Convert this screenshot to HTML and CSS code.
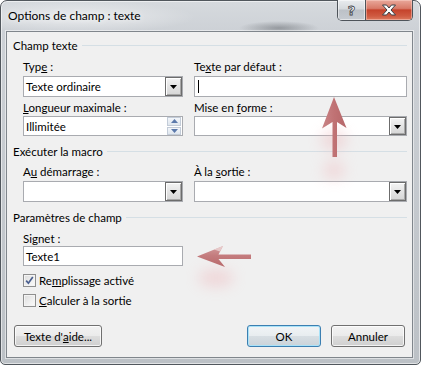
FILE: index.html
```html
<!DOCTYPE html>
<html lang="fr">
<head>
<meta charset="utf-8">
<title>Options de champ : texte</title>
<link rel="stylesheet" href="styles.css">
</head>
<body>
<div class="window">
  <div class="titlebar">
    <span class="title">Options de champ : texte</span>
    <div class="caption">
      <div class="cap-btn help"><span class="qmark">?</span></div>
      <div class="cap-btn close">
        <svg width="16" height="12" viewBox="0 0 16 12"><path d="M1.5 1 H5.5 L8 4 L10.5 1 H14.5 L10 6 L14.5 11 H10.5 L8 8 L5.5 11 H1.5 L6 6 Z" fill="#fff" stroke="#3a3f45" stroke-width="1" stroke-linejoin="round"/></svg>
      </div>
    </div>
  </div>
  <div class="client">
    <section class="group">
      <div class="group-head"><span>Champ texte</span><i class="rule"></i></div>
      <div class="fields first">
        <div class="field">
          <div class="lbl">Typ<u>e</u> :</div>
          <div class="combo"><span class="val">Texte ordinaire</span><span class="drop"><svg width="7" height="4" viewBox="0 0 7 4"><path d="M0 0H7L3.5 4Z" fill="#000"/></svg></span></div>
        </div>
        <div class="field">
          <div class="lbl">Te<u>x</u>te par défaut :</div>
          <div class="edit"><span class="caret"></span></div>
        </div>
        <div class="field row2">
          <div class="lbl"><u>L</u>ongueur maximale :</div>
          <div class="edit short"><span class="val">Illimitée</span>
            <span class="spin">
              <span class="spin-b"><svg width="7" height="4" viewBox="0 0 7 4"><path d="M0 4H7L3.5 0Z" fill="#5b79ab"/></svg></span>
              <span class="spin-b"><svg width="7" height="4" viewBox="0 0 7 4"><path d="M0 0H7L3.5 4Z" fill="#5b79ab"/></svg></span>
            </span>
          </div>
        </div>
        <div class="field row2">
          <div class="lbl">Mise en <u>f</u>orme :</div>
          <div class="combo short"><span class="val"></span><span class="drop"><svg width="7" height="4" viewBox="0 0 7 4"><path d="M0 0H7L3.5 4Z" fill="#000"/></svg></span></div>
        </div>
      </div>
    </section>

    <section class="group">
      <div class="group-head"><span>Exécuter la macro</span><i class="rule"></i></div>
      <div class="fields second">
        <div class="field">
          <div class="lbl">A<u>u</u> démarrage :</div>
          <div class="combo"><span class="val"></span><span class="drop"><svg width="7" height="4" viewBox="0 0 7 4"><path d="M0 0H7L3.5 4Z" fill="#000"/></svg></span></div>
        </div>
        <div class="field">
          <div class="lbl">À la <u>s</u>ortie :</div>
          <div class="combo"><span class="val"></span><span class="drop"><svg width="7" height="4" viewBox="0 0 7 4"><path d="M0 0H7L3.5 4Z" fill="#000"/></svg></span></div>
        </div>
      </div>
    </section>

    <section class="group">
      <div class="group-head"><span>Paramètres de champ</span><i class="rule"></i></div>
      <div class="fields third">
        <div class="field">
          <div class="lbl tight">Si<u>g</u>net :</div>
          <div class="edit short"><span class="val">Texte1</span></div>
        </div>
      </div>
      <div class="checks">
        <div class="check-row">
          <span class="box"><svg width="11" height="11" viewBox="0 0 11 11"><path d="M2.2 5.6 L4.4 8.2 L8.8 2" fill="none" stroke="#4a5f8f" stroke-width="1.7"/></svg></span>
          <span>Re<u>m</u>plissage activé</span>
        </div>
        <div class="check-row second-row">
          <span class="box"></span>
          <span><u>C</u>alculer à la sortie</span>
        </div>
      </div>
    </section>

    <div class="buttons">
      <div class="btn help-btn">Texte d'<u>a</u>ide...</div>
      <div class="btn ok">OK</div>
      <div class="btn cancel">Annuler</div>
    </div>
  </div>
</div>

<svg class="arrows" width="421" height="365" viewBox="0 0 421 365">
  <defs>
    <filter id="blur" x="-100%" y="-100%" width="300%" height="300%"><feGaussianBlur stdDeviation="7"/></filter>
    <linearGradient id="gUp" x1="0" y1="0" x2="1" y2="0">
      <stop offset="0" stop-color="#c98486"/>
      <stop offset="0.5" stop-color="#c07274"/>
      <stop offset="1" stop-color="#b56769"/>
    </linearGradient>
    <linearGradient id="gLeft" x1="0" y1="0" x2="0" y2="1">
      <stop offset="0" stop-color="#d39c9d"/>
      <stop offset="0.45" stop-color="#c47c7e"/>
      <stop offset="1" stop-color="#b8696b"/>
    </linearGradient>
  </defs>
  <g filter="url(#blur)" opacity="0.4">
    <ellipse cx="334" cy="140" rx="13" ry="10" fill="#eeb0b5"/>
    <ellipse cx="334" cy="170" rx="11" ry="10" fill="#f0b8bc"/>
    <ellipse cx="216" cy="278" rx="18" ry="9" fill="#eeb0b5"/>
  </g>
  <path d="M334 97 L346.5 128 L337 122 L337 157 L332.5 157 L332.5 122 L322 128.5 Z" fill="url(#gUp)"/>
  <path d="M197 256.5 L223 246 L218.5 254.5 L251 254.5 L251 259 L218.5 259 L225 267 Z" fill="url(#gLeft)"/>
  <path d="M214 249.5 L223 246 L220 251.5 Z" fill="#ecd6d6" opacity="0.8"/>
</svg>
</body>
</html>
```
FILE: styles.css
```css
* { box-sizing: border-box; }
html, body { margin: 0; padding: 0; }
body {
  width: 421px;
  height: 365px;
  overflow: hidden;
  position: relative;
  background: #ffffff;
  font-family: Lato, "Noto Sans", sans-serif;
  font-size: 11.5px;
  color: #000;
}
u { text-decoration: underline; text-underline-offset: 1px; }

.window {
  width: 421px;
  height: 365px;
  border: 1px solid #51575d;
  border-radius: 7px 7px 5px 5px;
  background:
    radial-gradient(ellipse 40px 7px at 278px 27px, rgba(80, 84, 90, 0.45), rgba(80, 84, 90, 0)),
    radial-gradient(ellipse 120px 16px at 75px 16px, rgba(255, 255, 255, 0.55), rgba(255, 255, 255, 0)),
    linear-gradient(180deg, #d6dade 0, #cdd1d6 30px, #bcc1c6 100%);
  box-shadow: inset 0 0 0 1px rgba(255, 255, 255, 0.55);
  display: flex;
  flex-direction: column;
}

.titlebar {
  height: 30px;
  display: flex;
  align-items: flex-start;
  padding-left: 7px;
}
.title {
  margin-top: 7px;
  line-height: 16px;
  font-size: 12px;
  color: #000;
  text-shadow: 0 0 6px rgba(255, 255, 255, 0.9);
}
.caption {
  margin-left: auto;
  margin-right: 7px;
  margin-top: -1px;
  height: 21px;
  display: flex;
  border: 1px solid #4e545a;
  border-top: none;
  border-radius: 0 0 5px 5px;
  overflow: hidden;
}
.cap-btn {
  height: 20px;
  display: flex;
  align-items: center;
  justify-content: center;
}
.help {
  width: 28px;
  border-right: 1px solid #4e545a;
  background: linear-gradient(180deg, #e9ecef 0, #d5d9dd 45%, #bcc1c7 50%, #c6cbd1 100%);
  box-shadow: inset 0 0 0 1px rgba(255, 255, 255, 0.5);
}
.qmark {
  font-family: "DejaVu Sans", sans-serif;
  font-weight: bold;
  font-size: 13px;
  line-height: 13px;
  color: #fff;
  -webkit-text-stroke: 0.8px #3d4248;
  margin-top: 1px;
}
.close {
  width: 46px;
  background: linear-gradient(180deg, #e9a89b 0, #d87a68 42%, #c5432c 50%, #cf5a41 80%, #dc7a5f 100%);
  box-shadow: inset 0 0 0 1px rgba(255, 220, 210, 0.45);
}
.close svg { display: block; }

.client {
  flex: 1;
  margin: 0 7px 6px 5px;
  background: #f0f0f0;
  border: 1px solid #80868c;
  box-shadow: 0 0 0 1px rgba(255, 255, 255, 0.5);
  padding: 0 5px 10px 6px;
  display: flex;
  flex-direction: column;
}

.group-head {
  display: flex;
  align-items: center;
  height: 15px;
  line-height: 15px;
  margin-top: 6px;
}
.group + .group .group-head { margin-top: 8px; }
.rule {
  flex: 1;
  height: 1px;
  margin-left: 4px;
  background: #d5dfe5;
}

.fields {
  display: grid;
  grid-template-columns: 160px 1fr;
  column-gap: 11px;
  padding-left: 10px;
}
.fields.first { margin-top: 6px; row-gap: 3px; }
.fields.second { margin-top: 5px; }
.fields.third { margin-top: 6px; }

.field { display: flex; flex-direction: column; }
.lbl {
  height: 15px;
  line-height: 15px;
  margin-bottom: 2px;
}
.row2 .lbl { margin-bottom: 1px; }
.lbl.tight { margin-bottom: 0; }

.edit, .combo {
  height: 21px;
  background: #fff;
  border: 1px solid #a9abb0;
  display: flex;
  align-items: center;
  padding-left: 2px;
}
.short { height: 20px; }
.val { flex: 1; line-height: 15px; white-space: nowrap; }
.caret {
  width: 1px;
  height: 13px;
  background: #000;
  margin-left: 1px;
}

.drop {
  width: 17px;
  height: 19px;
  border: 1px solid #6c6c6c;
  background: linear-gradient(180deg, #f4f4f4 0, #e4e4e4 50%, #d6d6d6 100%);
  box-shadow: inset 1px 1px 0 #ffffff, inset -1px -1px 0 #a8a8a8;
  display: flex;
  align-items: center;
  justify-content: center;
}
.short .drop { height: 18px; }
.drop svg { display: block; margin-top: 1px; }

.spin {
  display: flex;
  flex-direction: column;
  width: 14px;
  height: 18px;
  margin-right: 1px;
  gap: 1px;
}
.spin-b {
  flex: 1;
  border: 1px solid #c3ccd8;
  background: linear-gradient(180deg, #f3f6fa, #dfe6ee);
  display: flex;
  align-items: center;
  justify-content: center;
}
.spin-b svg { display: block; }

.checks {
  padding-left: 10px;
  margin-top: 7px;
}
.check-row {
  display: flex;
  align-items: center;
  height: 15px;
  line-height: 15px;
  gap: 3px;
}
.check-row.second-row { margin-top: 5px; }
.box {
  width: 13px;
  height: 13px;
  border: 1px solid #8f8f8f;
  background: linear-gradient(135deg, #dcdcdc 0, #f0f0f0 60%, #fbfbfb 100%);
  box-shadow: inset 0 0 0 1px #f4f4f4;
  display: flex;
  align-items: center;
  justify-content: center;
}
.box svg { display: block; }

.buttons {
  display: flex;
  margin-top: 17px;
  padding-left: 1px;
  padding-right: 2px;
  gap: 10px;
}
.btn {
  height: 22px;
  border: 1px solid #707070;
  border-radius: 3px;
  background: linear-gradient(180deg, #f2f2f2 0, #ebebeb 48%, #dddddd 52%, #cfcfcf 100%);
  box-shadow: inset 0 0 0 1px rgba(255, 255, 255, 0.75);
  display: flex;
  align-items: center;
  justify-content: center;
  line-height: 15px;
}
.help-btn { width: 88px; }
.ok {
  width: 74px;
  margin-left: auto;
  border-color: #3c7fb1;
  box-shadow: inset 0 0 0 1px #a9e2f8;
  background: linear-gradient(180deg, #f1f4f6 0, #e8edf0 48%, #d7dee3 52%, #cbd3d9 100%);
}
.cancel { width: 74px; }

.arrows {
  position: absolute;
  left: 0;
  top: 0;
  pointer-events: none;
}
```
